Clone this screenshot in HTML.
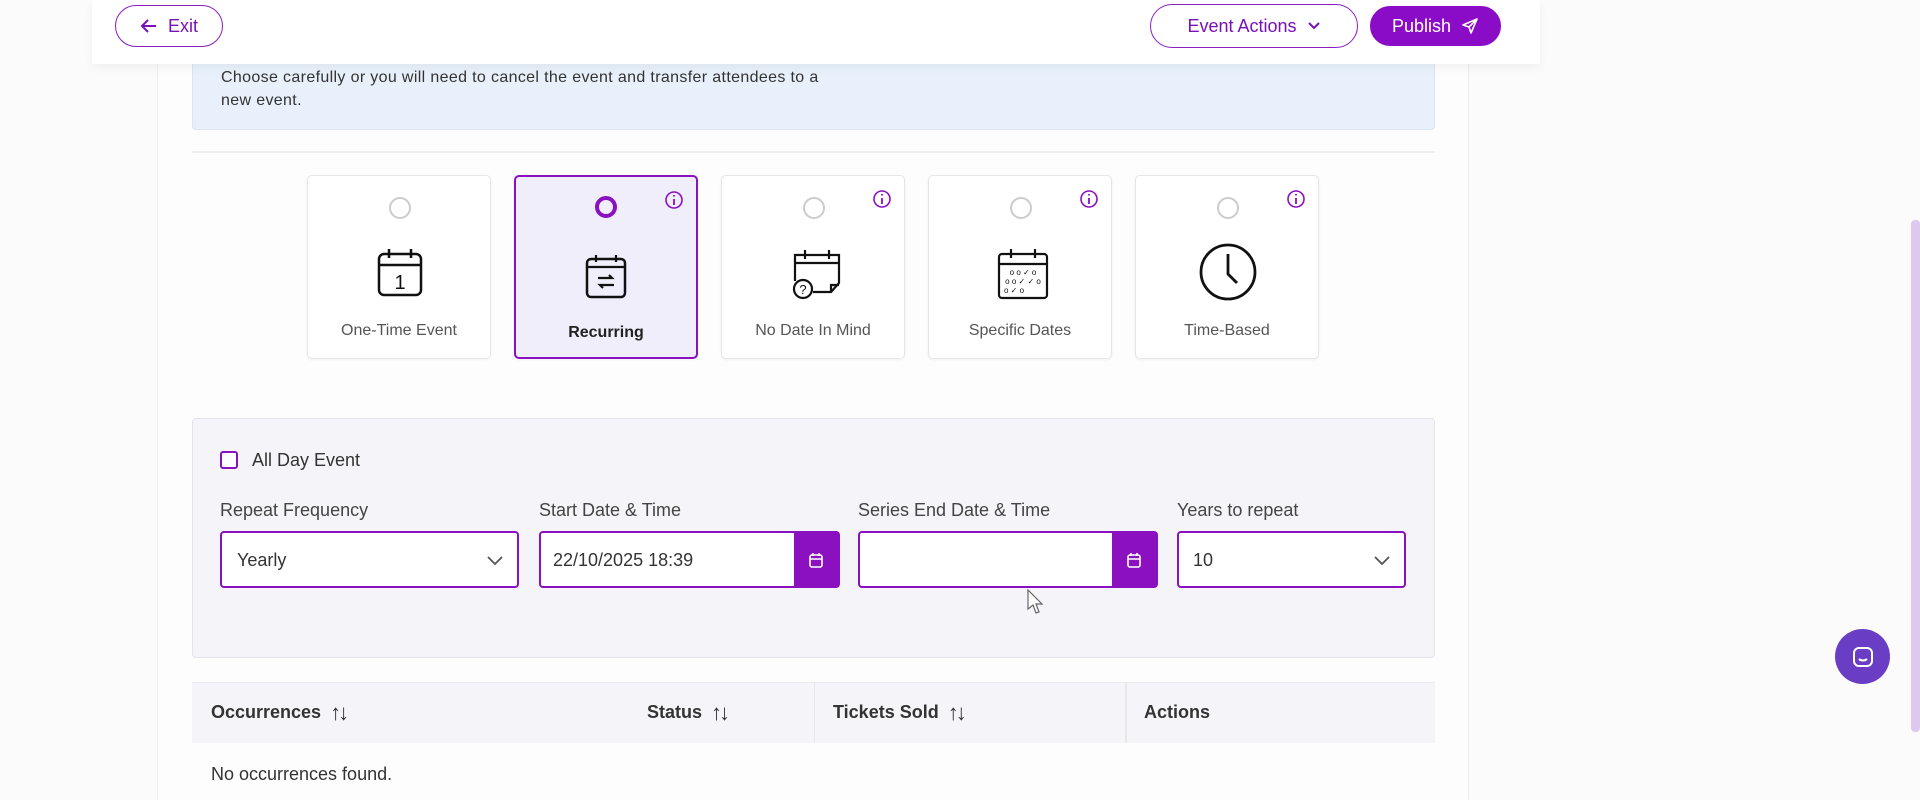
<!DOCTYPE html>
<html><head><meta charset="utf-8"><style>
*{box-sizing:border-box;margin:0;padding:0}
body{width:1920px;height:800px;overflow:hidden;background:#fbfbfb;font-family:"Liberation Sans",sans-serif;color:#333;position:relative}
.abs{position:absolute}
.main{left:157px;top:0;width:1312px;height:800px;background:#fdfdfd;border-left:1px solid #eee;border-right:1px solid #eee}
.header{left:92px;top:0;width:1448px;height:64px;background:#fff;box-shadow:0 4px 10px rgba(0,0,0,.05);z-index:5}
.pill{position:absolute;border:1.5px solid #8a1fc0;border-radius:24px;color:#7a10b8;font-size:18px;display:flex;align-items:center;justify-content:center;gap:10px}
.info{left:192px;top:60px;width:1243px;height:70px;background:#e8f1fb;border:1px solid #dbe6f0;border-top:none;border-radius:0 0 4px 4px;font-size:16px;letter-spacing:0.35px;color:#333;padding:6px 28px;line-height:23px}
.card{position:absolute;top:175px;width:184px;height:184px;background:#fff;border:1px solid #e6e6e6;border-radius:5px;box-shadow:0 1px 3px rgba(0,0,0,.05);text-align:center}
.card .r{position:absolute;left:81px;top:21px;width:22px;height:22px;border:2px solid #ccc;border-radius:50%}
.card .i{position:absolute;right:12px;top:13px}
.card svg.ic{position:absolute;left:67px;top:69px}
.card .l{position:absolute;left:0;right:0;top:146px;font-size:16px;color:#555}
.form{left:192px;top:418px;width:1243px;height:240px;background:#f5f4f8;border:1px solid #e6e4ea;border-radius:4px}
.lab{position:absolute;top:500px;font-size:18px;color:#444}
.inp{position:absolute;top:531px;height:57px;background:#fff;border:2px solid #8a10c0;border-radius:4px;font-size:18px;color:#333;display:flex;align-items:center;padding-left:15px;padding-top:2px}
.cb{position:absolute;right:0;top:0;bottom:0;width:44px;background:#8a10c0;display:flex;align-items:center;justify-content:center}
.th{position:absolute;top:682px;height:61px;font-weight:bold;font-size:18px;color:#333;display:flex;align-items:center}
.th span{font-weight:normal;margin-left:9px;font-size:22px;letter-spacing:-3px}
</style></head><body>
<div class="abs main"></div>
<div class="abs header">
 <div class="pill" style="left:23px;top:5px;width:108px;height:42px"><svg width="18" height="16" viewBox="0 0 18 16"><path d="M16 8H2M8 2L2 8l6 6" stroke="#7a10b8" stroke-width="2" fill="none"/></svg><span>Exit</span></div>
 <div class="pill" style="left:1058px;top:4px;width:208px;height:44px">Event Actions <svg width="14" height="10" viewBox="0 0 14 10"><path d="M2 2l5 5 5-5" stroke="#7a10b8" stroke-width="2" fill="none"/></svg></div>
 <div class="pill" style="left:1278px;top:6px;width:131px;height:40px;background:#8a0cc6;color:#fff;border-color:#8a0cc6">Publish <svg width="18" height="18" viewBox="0 0 18 18"><path d="M16 2L2 8l6 2 2 6z M16 2L8 10" stroke="#fff" stroke-width="1.6" fill="none" stroke-linejoin="round"/></svg></div>
</div>
<div class="abs info">Choose carefully or you will need to cancel the event and transfer attendees to a<br>new event.</div>
<div class="abs" style="left:192px;top:151px;width:1243px;height:2px;background:#eee"></div>

<div class="card" style="left:307px"><div class="r"></div>
<svg class="ic" width="50" height="54" viewBox="0 0 50 54"><rect x="4" y="9" width="42" height="41" rx="5" fill="none" stroke="#111" stroke-width="2.5"/><path d="M4 20h42M14 4v9M36 4v9" stroke="#111" stroke-width="2.5"/><text x="25" y="44" font-size="20" text-anchor="middle" font-family="Liberation Sans" fill="#111">1</text></svg>
<div class="l">One-Time Event</div></div>

<div class="card" style="left:514px;border:2.5px solid #8a10c0;background:#f0eefa"><div class="r" style="border:4.5px solid #8a10c0;left:79px;top:19px;width:22px;height:22px"></div>
<svg class="i" width="20" height="20" viewBox="0 0 20 20"><circle cx="10" cy="10" r="8" fill="none" stroke="#8a10c0" stroke-width="1.6"/><path d="M10 9v6M10 5v1.5" stroke="#8a10c0" stroke-width="1.8"/></svg>
<svg class="ic" width="50" height="54" viewBox="0 0 50 54" style="left:65px;top:75px"><rect x="6" y="7" width="38" height="38" rx="4" fill="none" stroke="#111" stroke-width="2.5"/><path d="M6 15h38M15 3v7M35 3v7M17 26h14l-3-3M33 33H19l3 3" stroke="#111" stroke-width="2.2" fill="none"/></svg>
<div class="l" style="font-weight:bold;color:#222;top:147px">Recurring</div></div>

<div class="card" style="left:721px"><div class="r"></div>
<svg class="i" width="20" height="20" viewBox="0 0 20 20"><circle cx="10" cy="10" r="8" fill="none" stroke="#8a10c0" stroke-width="1.6"/><path d="M10 9v6M10 5v1.5" stroke="#8a10c0" stroke-width="1.8"/></svg>
<svg class="ic" width="56" height="56" viewBox="0 0 56 56"><path d="M6 36V10h44v28l-8 9H24" fill="none" stroke="#111" stroke-width="2.2"/><path d="M6 18h44M16 5v9M40 5v9M42 47v-7h8" stroke="#111" stroke-width="2.2" fill="none"/><circle cx="14" cy="44" r="9" fill="#fff" stroke="#111" stroke-width="2.2"/><text x="14" y="49" font-size="13" text-anchor="middle" font-family="Liberation Sans" fill="#111">?</text></svg>
<div class="l">No Date In Mind</div></div>

<div class="card" style="left:928px"><div class="r"></div>
<svg class="i" width="20" height="20" viewBox="0 0 20 20"><circle cx="10" cy="10" r="8" fill="none" stroke="#8a10c0" stroke-width="1.6"/><path d="M10 9v6M10 5v1.5" stroke="#8a10c0" stroke-width="1.8"/></svg>
<svg class="ic" width="54" height="56" viewBox="0 0 54 56"><rect x="3" y="9" width="48" height="44" rx="3" fill="none" stroke="#111" stroke-width="2.2"/><path d="M3 19h48M15 4v9M39 4v9" stroke="#111" stroke-width="2.2"/><text x="27" y="30" font-size="8" text-anchor="middle" font-family="Liberation Sans" fill="#111">o o ✓ o</text><text x="27" y="39" font-size="8" text-anchor="middle" font-family="Liberation Sans" fill="#111">o o ✓ ✓ o</text><text x="18" y="48" font-size="8" text-anchor="middle" font-family="Liberation Sans" fill="#111">o ✓ o</text></svg>
<div class="l">Specific Dates</div></div>

<div class="card" style="left:1135px"><div class="r"></div>
<svg class="i" width="20" height="20" viewBox="0 0 20 20"><circle cx="10" cy="10" r="8" fill="none" stroke="#8a10c0" stroke-width="1.6"/><path d="M10 9v6M10 5v1.5" stroke="#8a10c0" stroke-width="1.8"/></svg>
<svg class="ic" width="60" height="60" viewBox="0 0 60 60" style="left:62px;top:66px"><circle cx="30" cy="30" r="27" fill="none" stroke="#111" stroke-width="2.8"/><path d="M30 12v20l9 9" fill="none" stroke="#111" stroke-width="2.8"/></svg>
<div class="l">Time-Based</div></div>

<div class="abs form"></div>
<div class="abs" style="left:220px;top:451px;width:18px;height:18px;border:2px solid #8a10c0;border-radius:3px;background:#fff"></div>
<div class="abs" style="left:252px;top:450px;font-size:18px;color:#333">All Day Event</div>
<div class="lab" style="left:220px">Repeat Frequency</div>
<div class="lab" style="left:539px">Start Date &amp; Time</div>
<div class="lab" style="left:858px">Series End Date &amp; Time</div>
<div class="lab" style="left:1177px">Years to repeat</div>
<div class="inp" style="left:220px;width:299px">Yearly<svg style="position:absolute;right:14px" width="16" height="10" viewBox="0 0 16 10"><path d="M1 1l7 7 7-7" stroke="#555" stroke-width="1.8" fill="none"/></svg></div>
<div class="inp" style="left:539px;width:301px;padding-left:12px">22/10/2025 18:39<div class="cb"><svg width="14" height="16" viewBox="0 0 14 16"><rect x="1" y="3" width="12" height="12" rx="2" fill="none" stroke="#fff" stroke-width="1.6"/><path d="M1 7h12M4 1v3M10 1v3" stroke="#fff" stroke-width="1.6"/></svg></div></div>
<div class="inp" style="left:858px;width:300px"><div class="cb"><svg width="14" height="16" viewBox="0 0 14 16"><rect x="1" y="3" width="12" height="12" rx="2" fill="none" stroke="#fff" stroke-width="1.6"/><path d="M1 7h12M4 1v3M10 1v3" stroke="#fff" stroke-width="1.6"/></svg></div></div>
<div class="inp" style="left:1177px;width:229px;padding-left:14px">10<svg style="position:absolute;right:14px" width="16" height="10" viewBox="0 0 16 10"><path d="M1 1l7 7 7-7" stroke="#555" stroke-width="1.8" fill="none"/></svg></div>
<svg class="abs" style="left:1026px;top:589px" width="18" height="26" viewBox="0 0 18 26"><path d="M2 1v19l5-4 3 8 3-1-3-8h6z" fill="#fff" stroke="#666" stroke-width="1.2"/></svg>

<div class="abs" style="left:192px;top:682px;width:1243px;height:61px;background:#f5f4f8;border-top:1px solid #eceaf0"></div>
<div class="abs" style="left:814px;top:682px;width:1px;height:61px;background:#e8e8e8"></div>
<div class="abs" style="left:1125px;top:682px;width:2px;height:61px;background:#e8e8e8"></div>
<div class="abs" style="left:192px;top:743px;width:1243px;height:57px;background:#fdfdfd"></div>
<div class="th" style="left:211px">Occurrences <span>↑↓</span></div>
<div class="th" style="left:647px">Status <span>↑↓</span></div>
<div class="th" style="left:833px">Tickets Sold <span>↑↓</span></div>
<div class="th" style="left:1144px">Actions</div>
<div class="abs" style="left:211px;top:764px;font-size:18px;color:#333">No occurrences found.</div>

<div class="abs" style="left:1911px;top:220px;width:9px;height:512px;background:#dfc8f0;border-radius:4px"></div>
<div class="abs" style="left:1835px;top:629px;width:55px;height:55px;border-radius:50%;background:#6a3ec4;display:flex;align-items:center;justify-content:center"><svg width="24" height="24" viewBox="0 0 24 24"><rect x="3" y="3" width="18" height="18" rx="5" fill="none" stroke="#fff" stroke-width="2"/><path d="M8 14c2 2 6 2 8 0" stroke="#fff" stroke-width="2" fill="none"/></svg></div>
</body></html>
